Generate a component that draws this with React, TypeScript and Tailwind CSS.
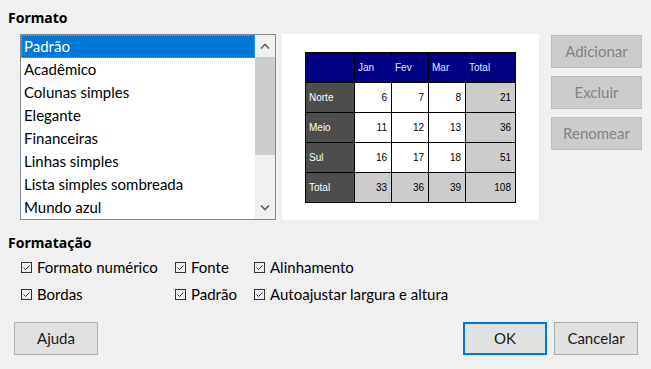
import React from "react";

const items = [
  "Padrão",
  "Acadêmico",
  "Colunas simples",
  "Elegante",
  "Financeiras",
  "Linhas simples",
  "Lista simples sombreada",
  "Mundo azul",
];

type Cell = { t: string; kind: "head" | "side" | "num" | "tot" | "corner" };

const rows: Cell[][] = [
  [
    { t: "", kind: "corner" },
    { t: "Jan", kind: "head" },
    { t: "Fev", kind: "head" },
    { t: "Mar", kind: "head" },
    { t: "Total", kind: "head" },
  ],
  [
    { t: "Norte", kind: "side" },
    { t: "6", kind: "num" },
    { t: "7", kind: "num" },
    { t: "8", kind: "num" },
    { t: "21", kind: "tot" },
  ],
  [
    { t: "Meio", kind: "side" },
    { t: "11", kind: "num" },
    { t: "12", kind: "num" },
    { t: "13", kind: "num" },
    { t: "36", kind: "tot" },
  ],
  [
    { t: "Sul", kind: "side" },
    { t: "16", kind: "num" },
    { t: "17", kind: "num" },
    { t: "18", kind: "num" },
    { t: "51", kind: "tot" },
  ],
  [
    { t: "Total", kind: "side" },
    { t: "33", kind: "tot" },
    { t: "36", kind: "tot" },
    { t: "39", kind: "tot" },
    { t: "108", kind: "tot" },
  ],
];

function cellClass(kind: Cell["kind"]) {
  switch (kind) {
    case "corner":
      return "bg-[#000080]";
    case "head":
      return "bg-[#000080] text-[#e6e6ff] justify-start pl-[3px]";
    case "side":
      return "bg-[#4d4d4d] text-white justify-start pl-[3px]";
    case "num":
      return "bg-white text-black justify-end pr-[4px]";
    case "tot":
      return "bg-[#cccccc] text-black justify-end pr-[4px]";
  }
}

function Check() {
  return (
    <svg width="11" height="11" viewBox="0 0 11 11" className="shrink-0">
      <rect x="0.5" y="0.5" width="10" height="10" fill="none" stroke="#333333" />
      <polyline points="2.5,5.5 4.5,7.5 8.5,3.5" fill="none" stroke="#333333" strokeWidth="1" />
    </svg>
  );
}

function CheckItem({ label }: { label: string }) {
  return (
    <div className="flex items-center gap-[5px] h-[18px] leading-[18px]">
      <Check />
      <span>{label}</span>
    </div>
  );
}

function Chevron({ up }: { up?: boolean }) {
  return (
    <svg width="10" height="6" viewBox="0 0 10 6">
      <polyline
        points={up ? "1,5.5 5,1.5 9,5.5" : "1,0.5 5,4.5 9,0.5"}
        fill="none"
        stroke="#606060"
        strokeWidth="1.6"
      />
    </svg>
  );
}

export default function App() {
  return (
    <div
      className="w-[651px] h-[369px] bg-[#f0f0f0] flex flex-col text-[15px] text-[#000000] overflow-hidden"
      style={{ fontFamily: "Lato, 'Noto Sans', sans-serif" }}
    >
      <div className="pt-[8px] pl-[8px] font-bold text-[14px] leading-[19px] font-['Noto_Sans',sans-serif]">
        Formato
      </div>

      <div className="flex mt-[7px] pl-[20px]">
        {/* List box */}
        <div className="w-[256px] h-[186px] border border-[#828790] bg-white flex">
          <div className="w-[234px] flex flex-col">
            {items.map((it, i) => (
              <div
                key={it}
                className={
                  i === 0
                    ? "h-[23px] leading-[23px] pl-[3px] bg-[#0078d7] text-white outline-1 outline-dotted outline-[#f08a2c] -outline-offset-1"
                    : "h-[23px] leading-[23px] pl-[3px] text-black"
                }
              >
                {it}
              </div>
            ))}
          </div>
          <div className="w-[20px] bg-[#f0f0f0] flex flex-col">
            <div className="h-[22px] flex items-center justify-center">
              <Chevron up />
            </div>
            <div className="h-[98px] bg-[#cdcdcd]" />
            <div className="flex-1" />
            <div className="h-[22px] flex items-center justify-center">
              <Chevron />
            </div>
          </div>
        </div>

        {/* Preview */}
        <div className="ml-[6px] w-[257px] h-[186px] bg-white pt-[18px] pl-[23px]">
          <div className="inline-grid grid-cols-[48px_36px_36px_36px_49px] auto-rows-[29px] gap-px p-px bg-black text-[10px] font-['Liberation_Sans',Arial,sans-serif]">
            {rows.flat().map((c, i) => (
              <div key={i} className={"flex items-center " + cellClass(c.kind)}>
                {c.t}
              </div>
            ))}
          </div>
        </div>

        {/* Right buttons */}
        <div className="ml-[12px] mt-[1px] flex flex-col gap-[8px]">
          {["Adicionar", "Excluir", "Renomear"].map((b) => (
            <div
              key={b}
              className="w-[91px] h-[33px] border border-[#bfbfbf] bg-[#cccccc] text-[#838383] flex items-center justify-center"
            >
              {b}
            </div>
          ))}
        </div>
      </div>

      <div className="mt-[13px] pl-[8px] font-bold text-[14px] leading-[19px] font-['Noto_Sans',sans-serif]">
        Formatação
      </div>

      <div className="mt-[6px] pl-[21px] grid grid-cols-[154px_79px_auto] gap-y-[9px]">
        <CheckItem label="Formato numérico" />
        <CheckItem label="Fonte" />
        <CheckItem label="Alinhamento" />
        <CheckItem label="Bordas" />
        <CheckItem label="Padrão" />
        <CheckItem label="Autoajustar largura e altura" />
      </div>

      <div className="mt-auto pb-[14px] pl-[14px] pr-[13px] flex items-center">
        <button className="w-[84px] h-[33px] border border-[#adadad] bg-[#e1e1e1] text-[#1a1a1a]">
          Ajuda
        </button>
        <div className="flex-1" />
        <button className="w-[84px] h-[33px] border-2 border-[#0078d7] bg-[#e1e1e1] text-[#1a1a1a]">
          OK
        </button>
        <button className="ml-[7px] w-[84px] h-[33px] border border-[#adadad] bg-[#e1e1e1] text-[#1a1a1a]">
          Cancelar
        </button>
      </div>
    </div>
  );
}
